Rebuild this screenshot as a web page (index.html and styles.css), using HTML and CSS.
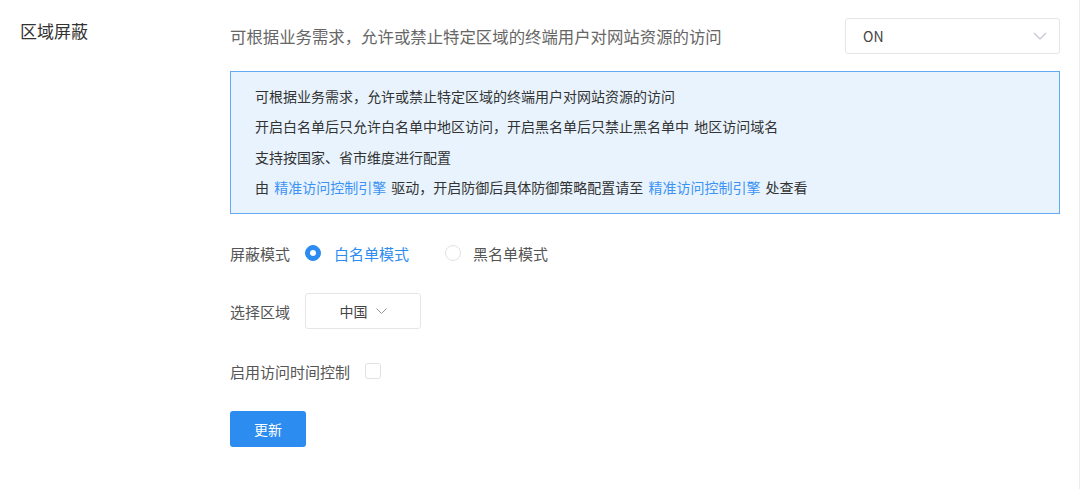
FILE: index.html
```html
<!DOCTYPE html>
<html lang="zh-CN">
<head>
    <meta charset="UTF-8">
    <meta name="viewport" content="width=device-width, initial-scale=1.0">
    <title>区域屏蔽</title>
    <link rel="stylesheet" href="styles.css">
</head>
<body>
    <div class="page">
        <div class="section-title">区域屏蔽</div>

        <div class="section-body">
            <div class="top-row">
                <p class="desc">可根据业务需求，允许或禁止特定区域的终端用户对网站资源的访问</p>
                <div class="select switch-select">
                    <span>ON</span>
                    <svg class="chevron" width="14" height="8" viewBox="0 0 14 8"><path d="M1 1l6 6 6-6" fill="none" stroke="#c0c4cc" stroke-width="1.2"/></svg>
                </div>
            </div>

            <div class="info-box">
                <p>可根据业务需求，允许或禁止特定区域的终端用户对网站资源的访问</p>
                <p>开启白名单后只允许白名单中地区访问，开启黑名单后只禁止黑名单中 地区访问域名</p>
                <p>支持按国家、省市维度进行配置</p>
                <p>由 <a href="#">精准访问控制引擎</a> 驱动，开启防御后具体防御策略配置请至 <a href="#">精准访问控制引擎</a> 处查看</p>
            </div>

            <div class="form">
                <div class="form-row row-mode">
                    <span class="form-label">屏蔽模式</span>
                    <label class="radio checked"><span class="radio-dot"></span>白名单模式</label>
                    <label class="radio"><span class="radio-dot"></span>黑名单模式</label>
                </div>

                <div class="form-row row-region">
                    <span class="form-label">选择区域</span>
                    <div class="select region-select">
                        <span>中国</span>
                        <svg class="chevron" width="11" height="6" viewBox="0 0 11 6"><path d="M0.5 0.5l5 5 5-5" fill="none" stroke="#909399" stroke-width="1"/></svg>
                    </div>
                </div>

                <div class="form-row row-time">
                    <span class="form-label">启用访问时间控制</span>
                    <span class="checkbox"></span>
                </div>

                <div class="form-row row-submit">
                    <button class="btn-primary">更新</button>
                </div>
            </div>
        </div>
    </div>
</body>
</html>
```

FILE: styles.css
```css
* {
    margin: 0;
    padding: 0;
    box-sizing: border-box;
}

body {
    font-family: "Noto Sans CJK SC", "Noto Sans", sans-serif;
    background: #fff;
    color: #333;
    width: 1080px;
    height: 489px;
    overflow: hidden;
}

.page {
    display: flex;
    width: 1080px;
    height: 489px;
    padding: 18px 19px 0 20px;
    border-right: 1px solid #ececec;
}

.section-title {
    width: 210px;
    flex-shrink: 0;
    font-size: 17px;
    line-height: 26px;
    color: #333;
}

.section-body {
    width: 830px;
}

.top-row {
    display: flex;
    align-items: center;
    justify-content: space-between;
}

.desc {
    font-size: 16.4px;
    color: #666;
}

.select {
    display: flex;
    align-items: center;
    height: 36px;
    border: 1px solid #e6e6e6;
    border-radius: 3px;
    background: #fff;
    font-size: 14px;
    color: #444;
}

.switch-select {
    width: 215px;
    padding: 0 12px 0 17px;
    justify-content: space-between;
}

.info-box {
    margin-top: 17px;
    padding: 9px 24px 11px;
    background: #e8f3fe;
    border: 1px solid #62aaf6;
    font-size: 14px;
    line-height: 30.3px;
    word-spacing: 2px;
    color: #333;
}

.info-box a {
    color: #3d93f3;
    text-decoration: none;
}

.form {
    margin-top: 21px;
    display: flex;
    flex-direction: column;
}

.form-row {
    display: flex;
    align-items: center;
    height: 36px;
    font-size: 15px;
    color: #555;
}

.row-region {
    margin-top: 22px;
}

.row-time {
    margin-top: 24px;
}

.row-submit {
    margin-top: 22px;
}

.form-label {
    margin-right: 15px;
}

.radio {
    display: flex;
    align-items: center;
    margin-right: 36px;
    color: #555;
}

.radio-dot {
    width: 16px;
    height: 16px;
    border: 1px solid #e2e2e2;
    border-radius: 50%;
    margin-right: 12px;
    background: #fff;
}

.radio.checked {
    color: #2d8cf0;
}

.radio.checked .radio-dot {
    background: #2d8cf0;
    border-color: #2d8cf0;
    margin-right: 13px;
    display: flex;
    align-items: center;
    justify-content: center;
}

.radio.checked .radio-dot::after {
    content: '';
    width: 6px;
    height: 6px;
    border-radius: 50%;
    background: #fff;
}

.region-select {
    width: 116px;
    justify-content: center;
    gap: 8px;
}

.checkbox {
    width: 16px;
    height: 16px;
    border: 1px solid #e2e2e2;
    border-radius: 3px;
    background: #fff;
}

.btn-primary {
    width: 76px;
    height: 36px;
    border: none;
    border-radius: 3px;
    background: #2d8cf0;
    color: #fff;
    font-family: inherit;
    font-size: 14px;
    cursor: pointer;
}
```
